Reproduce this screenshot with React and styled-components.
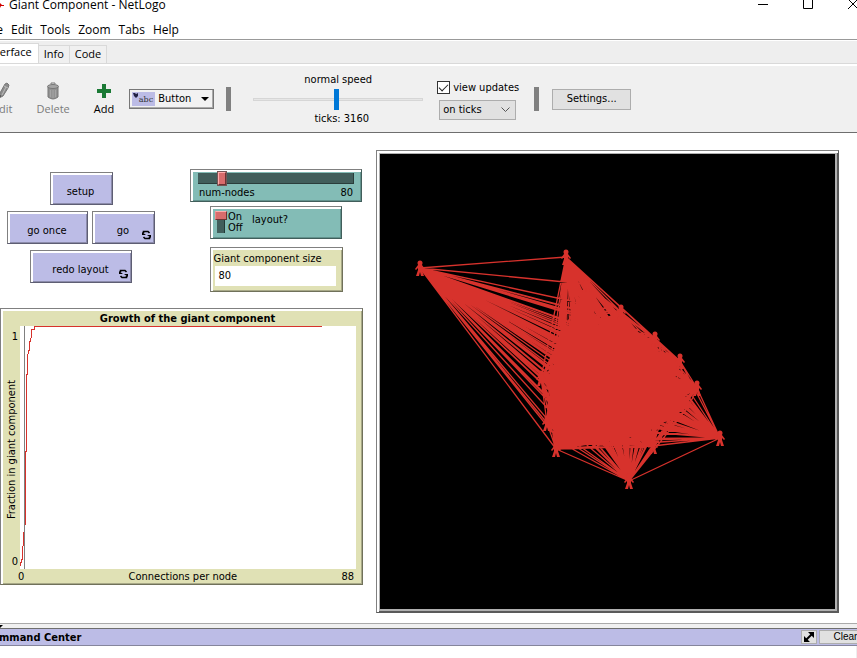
import React from "react";
import styled, { createGlobalStyle, css } from "styled-components";

const GlobalStyle = createGlobalStyle`
  *, *::before, *::after { box-sizing: border-box; }
  html, body, #root { height: 100%; }
  body {
    margin: 0;
    overflow: hidden;
    background: #fff;
    color: #000;
    font: 11px/14px "DejaVu Sans Condensed", Tahoma, "DejaVu Sans", sans-serif;
  }
  button, select, input { font: inherit; color: inherit; margin: 0; }
`;

const Window = styled.div`
  display: flex;
  flex-direction: column;
  height: 100%;
  overflow: hidden;
`;

const TitleBar = styled.header`
  display: flex;
  justify-content: space-between;
  height: 20px;
  flex: none;
`;

const Title = styled.h1`
  display: flex;
  align-items: center;
  gap: 5px;
  height: 10px;
  margin: 0;
  font: 12px/10px "Open Sans", sans-serif;
`;

const WindowButtons = styled.div`
  display: flex;
  gap: 15px;
  height: 10px;
  margin-right: -11px;
`;

const WindowButton = styled.button`
  width: 30px;
  height: 10px;
  padding: 0;
  border: 0;
  background: none;
  svg { display: block; margin: 0 auto; }
`;

const MenuBar = styled.nav`
  display: flex;
  gap: 8px;
  height: 20px;
  flex: none;
  margin-left: -16px;
  border-bottom: 1px solid #999;
`;

const MenuItem = styled.button`
  padding: 0;
  border: 0;
  background: none;
  font: 12px/19px "Open Sans", sans-serif;
`;

const TabBar = styled.div`
  display: flex;
  align-items: flex-end;
  flex: none;
  height: 23px;
  margin-top: 1px;
  padding-top: 2px;
  background: #eee;
  border-bottom: 1px solid #d9d9d9;
`;

const Tab = styled.button`
  height: ${(p) => (p.$active ? 20 : 18)}px;
  padding: 0 ${(p) => (p.$active ? 6 : 5)}px ${(p) => (p.$active ? 4 : 2)}px;
  border: 1px solid #d9d9d9;
  border-left: 0;
  border-bottom: 0;
  background: ${(p) => (p.$active ? "#fff" : "#f0f0f0")};
  font: 11px/16px "Open Sans", sans-serif;
  margin-left: ${(p) => (p.$active ? -20 : 0)}px;
`;

const Toolbar = styled.div`
  display: flex;
  align-items: center;
  flex: none;
  height: 67px;
  margin-top: 2px;
  background: #f0f0f0;
  border-bottom: 1px solid #6e6e6e;
`;

const Tools = styled.div`
  display: flex;
  gap: 24px;
  margin-left: -7px;
  margin-right: 15px;
`;

const ToolButton = styled.button`
  display: flex;
  flex-direction: column;
  align-items: center;
  gap: 1px;
  padding: 0;
  border: 0;
  background: none;
  color: #000;
  font: 11px/16px "Open Sans", sans-serif;
  &:disabled { color: #7b7b7b; }
`;

const WidgetPicker = styled.label`
  display: flex;
  align-items: center;
  width: 85px;
  height: 20px;
  margin-right: 12px;
  padding: 0 4px 0 2px;
  border: 1px solid #777;
  background: #f2f2f2;
  box-shadow: inset -1px -1px #aaa;
`;

const PickerGlyph = styled.span`
  width: 23px;
  height: 14px;
  flex: none;
  background: #bcbce6;
  font: 8px/16px "DejaVu Serif", serif;
  color: #333;
  text-align: right;
  padding-right: 2px;
  position: relative;
  svg { position: absolute; left: 1px; top: 1px; }
`;

const PlainSelect = styled.select`
  appearance: none;
  flex: 1;
  min-width: 0;
  height: 100%;
  padding: 0 0 0 3px;
  border: 0;
  background: none;
`;

const Separator = styled.div`
  width: 5px;
  height: 24px;
  flex: none;
  background: #808080;
`;

const SpeedBox = styled.label`
  display: flex;
  flex-direction: column;
  align-items: center;
  gap: 2px;
  width: 170px;
  margin: 0 14px 0 22px;
`;

const SpeedRange = styled.input`
  appearance: none;
  width: 100%;
  height: 21px;
  background: linear-gradient(#e6e6e6, #e6e6e6) center / 168px 1px no-repeat, linear-gradient(#d6d6d6, #d6d6d6) center / 100% 3px no-repeat;
  &::-webkit-slider-thumb {
    appearance: none;
    width: 5px;
    height: 21px;
    background: #0078d7;
  }
`;

const Ticks = styled.span`
  padding-left: 7px;
`;

const Updates = styled.div`
  display: flex;
  flex-direction: column;
  gap: 5px;
  width: 79px;
  margin-right: 18px;
  padding-top: 2px;
`;

const CheckLabel = styled.label`
  display: flex;
  align-items: center;
  gap: 3px;
  white-space: nowrap;
`;

const CheckBox = styled.input`
  appearance: none;
  flex: none;
  width: 13px;
  height: 13px;
  border: 1px solid #333;
  background: #fff;
  display: grid;
  place-items: center;
  &:checked::before {
    content: "";
    width: 9px;
    height: 5px;
    margin-top: -2px;
    border: solid #222;
    border-width: 0 0 1px 1px;
    transform: rotate(-45deg);
  }
`;

const SelectFrame = styled.div`
  display: flex;
  align-items: center;
  width: 77px;
  height: 20px;
  margin-left: 2px;
  padding-right: 5px;
  border: 1px solid #adadad;
  background: #e1e1e1;
`;

const PushButton = styled.button`
  width: 79px;
  height: 21px;
  margin-left: 13px;
  padding: 0;
  border: 1px solid #adadad;
  background: #e1e1e1;
`;

const Canvas = styled.main`
  display: flex;
  align-items: flex-start;
  gap: 13px;
  flex: 1;
  min-height: 0;
  padding: 17px 18px 0 0;
`;

const LeftColumn = styled.div`
  display: flex;
  flex-direction: column;
  gap: 16px;
  width: 363px;
  flex: none;
  padding-top: 19px;
`;

const WidgetGroups = styled.div`
  display: flex;
  gap: 27px;
`;

const ButtonGroup = styled.div`
  display: flex;
  flex-direction: column;
  align-items: center;
  gap: 6px;
  width: 162px;
  padding-top: 3px;
`;

const ButtonRow = styled.div`
  display: flex;
  gap: 4px;
`;

const ControlGroup = styled.div`
  display: flex;
  flex-direction: column;
  align-items: center;
  flex: 1;
`;

const raised = css`
  border: 1px solid;
  border-color: #808080 ${(p) => p.$dark} ${(p) => p.$dark} #808080;
  box-shadow: inset 2px 2px #fff, inset -1px -1px ${(p) => p.$shade};
  background: ${(p) => p.$fill};
`;

const violet = { $fill: "#bcbce6", $shade: "#8c8cab", $dark: "#5e5e73" };
const teal = { $fill: "#83bcb6", $shade: "#62928d", $dark: "#415e5b" };
const khaki = { $fill: "#e0e1b5", $shade: "#a8a988", $dark: "#70715a" };

const ModelButton = styled.button`
  ${raised}
  width: ${(p) => p.$width}px;
  height: 33px;
  padding: 6px 1px 0 0;
  position: relative;
  svg { position: absolute; right: 3px; bottom: 3px; }
`;

const SliderWidget = styled.label`
  ${raised}
  display: block;
  width: 172px;
  height: 33px;
  padding: 1px 7px 0;
`;

const NodeRange = styled.input`
  appearance: none;
  display: block;
  width: 100%;
  height: 15px;
  background:
    linear-gradient(#2a3d3b, #2a3d3b) left 0 top 12px / 100% 1px no-repeat,
    linear-gradient(#2a3d3b, #2a3d3b) right 0 top 2px / 1px 11px no-repeat,
    linear-gradient(#415e5b, #415e5b) left 0 top 2px / 100% 11px no-repeat;
  &::-webkit-slider-thumb {
    appearance: none;
    width: 8px;
    height: 13px;
    border: 1px solid;
    border-color: #ffadad #6c3333 #6c3333 #ffadad;
    background: #d86c6c;
    box-shadow: 0 0 0 1px #765454;
  }
`;

const SliderText = styled.span`
  display: flex;
  justify-content: space-between;
  padding: 0 1px;
`;

const SwitchWidget = styled.label`
  ${raised}
  display: flex;
  width: 132px;
  height: 33px;
  margin-top: 4px;
  padding: 4px 4px 3px;
`;

const SwitchLever = styled.input`
  appearance: none;
  width: 12px;
  height: 22px;
  border: 0;
  background: linear-gradient(90deg, transparent 2px, #415e5b 2px, #415e5b 9px, #223a37 9px, #223a37 10px, transparent 10px);
  &::before {
    content: "";
    display: block;
    width: 12px;
    height: 9px;
    border: 1px solid;
    border-color: #ffadad #6c3333 #6c3333 #e88;
    background: #d86c6c;
  }
  &:not(:checked)::before { margin-top: 13px; }
`;

const OnOff = styled.span`
  display: flex;
  flex-direction: column;
  width: 25px;
  padding-left: 1px;
  line-height: 11px;
`;

const SwitchName = styled.span`
  padding-top: 2px;
`;

const Monitor = styled.div`
  ${raised}
  width: 133px;
  height: 45px;
  margin-top: 8px;
  padding: 3px 6px 0 3px;
`;

const MonitorLabel = styled.label`
  display: block;
  line-height: 15px;
`;

const MonitorValue = styled.output`
  display: block;
  height: 20px;
  margin-left: 1px;
  padding: 0 4px;
  background: #fff;
  line-height: 20px;
`;

const Plot = styled.section`
  ${raised}
  display: grid;
  grid-template-columns: 17px minmax(0, 1fr);
  grid-template-rows: 15px 243px 15px;
  padding: 2px 6px 0 2px;
`;

const PlotTitle = styled.h2`
  grid-column: 1 / -1;
  margin: 0;
  padding-left: 16px;
  text-align: center;
  font: bold 11px/15px "DejaVu Sans Condensed", Tahoma, sans-serif;
`;

const YAxis = styled.div`
  display: flex;
  flex-direction: column;
  align-items: center;
  justify-content: space-between;
  padding: 4px 0 0;
`;

const YLabel = styled.span`
  writing-mode: vertical-rl;
  transform: rotate(180deg);
`;

const AxisNumber = styled.span`
  padding-left: 7px;
`;

const PlotArea = styled.svg`
  display: block;
  width: 100%;
  height: 243px;
  background: #fff;
`;

const XAxis = styled.div`
  grid-column: 1 / -1;
  display: flex;
  justify-content: space-between;
  padding: 1px 2px 0 15px;
`;

const View = styled.div`
  flex: 1;
  min-width: 0;
  padding: 2px 1px 1px 2px;
  border: 1px solid;
  border-color: #808080 #5a5a5a #5a5a5a #808080;
  box-shadow: inset 2px 2px #fff, inset -1px -1px #5a5a5a;
`;

const World = styled.svg`
  display: block;
  width: 100%;
  aspect-ratio: 1;
  background: #000;
  border: 1px solid #b0b0b0;
  border-right-width: 2px;
  border-bottom-width: 2px;
`;

const Splitter = styled.div`
  display: flex;
  flex: none;
  height: 6px;
  border-top: 1px solid #aaa;
  border-bottom: 1px solid #6e6e6e;
  background: #f0f0f0;
`;

const CommandBar = styled.div`
  display: flex;
  align-items: center;
  gap: 2px;
  flex: none;
  height: 17px;
  background: #bcbce6;
  border-bottom: 1px solid #85859c;
`;

const CommandTitle = styled.h2`
  flex: 1;
  margin: 0 0 0 -15px;
  font: bold 11px/15px "DejaVu Sans Condensed", Tahoma, sans-serif;
`;

const BarButton = styled.button`
  display: flex;
  align-items: center;
  justify-content: center;
  width: ${(p) => p.$width}px;
  height: 14px;
  padding: 0;
  border: 1px solid #adadad;
  background: #e1e1e1;
  font: 10px/12px "Liberation Sans", sans-serif;
  margin-right: ${(p) => (p.$cut ? -15 : 0)}px;
`;

const CommandOutput = styled.div`
  height: 12px;
  flex: none;
  border-right: 1px solid #eee;
`;

const RED = "#d7322c";

const rim = [
  [420, 268], [566, 257], [586, 284], [621, 312], [655, 339], [680, 361], [697, 388],
  [720, 438], [653, 446], [629, 481], [556, 449], [547, 423], [541, 378],
];

function makeNodes() {
  let seed = 17;
  const next = () => {
    seed = (seed * 16807) % 2147483647;
    return seed / 2147483647;
  };
  const bounds = [[572, 302], [622, 318], [655, 346], [680, 370], [693, 395], [688, 420], [660, 437], [610, 446], [560, 444], [550, 415], [544, 375]];
  const inside = (x, y) => {
    let hit = false;
    for (let i = 0, j = bounds.length - 1; i < bounds.length; j = i++) {
      const [a, b] = bounds[i];
      const [c, d] = bounds[j];
      if (b > y !== d > y && x < ((c - a) * (y - b)) / (d - b) + a) hit = !hit;
    }
    return hit;
  };
  const nodes = [...rim];
  while (nodes.length < 80) {
    const x = Math.round(544 + next() * 150);
    const y = Math.round(302 + next() * 144);
    if (inside(x, y)) nodes.push([x, y]);
  }
  return nodes;
}

const nodes = makeNodes();
const links = nodes
  .flatMap(([x, y], i) => nodes.slice(i + 1).map(([a, b]) => `M${x} ${y}L${a} ${b}`))
  .join("");

const Person = ({ x, y }) => (
  <g transform={`translate(${x} ${y})`}>
    <circle cx="0" cy="-5" r="2.5" />
    <path d="M-2-3H2L5 1 4 2 2 0V2L4 8H1L0 4-1 8H-4L-2 2V0L-4 2-5 1Z" />
  </g>
);

const Forever = () => (
  <svg width="9" height="10" viewBox="0 0 9 10" aria-hidden="true">
    <path d="M1.500 3V1.500H6L7.500 3M7.500 7V8.500H3L1.500 7" fill="none" stroke="#000" strokeWidth="1.600" />
    <path d="M0 2V5H4ZM9 8V5H5Z" />
  </svg>
);

const Pencil = () => (
  <svg width="18" height="18" viewBox="0 0 18 18" aria-hidden="true">
    <path d="M5 16 6 11 11 2 13 1 15 3 14 6 9 14Z" fill="#8c8c8c" stroke="#777" />
    <path d="M10 4 14 6M8 13 12 5" stroke="#bbb" fill="none" />
    <path d="M5 16 6 13 7 14Z" fill="#333" />
  </svg>
);

const Trash = () => (
  <svg width="18" height="18" viewBox="0 0 18 18" aria-hidden="true">
    <path d="M4 5V15Q9 19 14 15V5Z" fill="#929292" stroke="#777" />
    <ellipse cx="9" cy="4.5" rx="5.5" ry="2" fill="#a5a5a5" stroke="#777" />
    <path d="M7 2V1H11V2" fill="none" stroke="#777" />
    <path d="M6.500 8V15M9 8V16M11.500 8V15" stroke="#a5a5a5" />
  </svg>
);

const Plus = () => (
  <svg width="18" height="18" viewBox="0 0 18 18" aria-hidden="true">
    <path d="M7 2H11V7H16V11H11V16H7V11H2V7H7Z" fill="#1b7a35" />
  </svg>
);

export default function App() {
  return (
    <>
      <GlobalStyle />
      <Window>
        <TitleBar>
          <Title>
            <svg width="4" height="7" viewBox="0 0 4 7" aria-hidden="true">
              <path d="M0 1 2 3H4V4H1L0 6Z" fill="#d00000" />
            </svg>
            Giant Component - NetLogo
          </Title>
          <WindowButtons>
            <WindowButton aria-label="Minimize">
              <svg width="10" height="10"><path d="M0 4.500H10" stroke="#000" /></svg>
            </WindowButton>
            <WindowButton aria-label="Maximize">
              <svg width="10" height="10"><path d="M.5-1V8.500H9.500V-1" fill="none" stroke="#000" /></svg>
            </WindowButton>
            <WindowButton aria-label="Close">
              <svg width="10" height="10"><path d="M0-1 10 9M10-1 0 9" stroke="#000" /></svg>
            </WindowButton>
          </WindowButtons>
        </TitleBar>
        <MenuBar>
          {["File", "Edit", "Tools", "Zoom", "Tabs", "Help"].map((name) => (
            <MenuItem key={name}>{name}</MenuItem>
          ))}
        </MenuBar>
        <TabBar role="tablist">
          <Tab role="tab" aria-selected="true" $active>Interface</Tab>
          <Tab role="tab" aria-selected="false">Info</Tab>
          <Tab role="tab" aria-selected="false">Code</Tab>
        </TabBar>
        <Toolbar>
          <Tools>
            <ToolButton disabled><Pencil />Edit</ToolButton>
            <ToolButton disabled><Trash />Delete</ToolButton>
            <ToolButton><Plus />Add</ToolButton>
          </Tools>
          <WidgetPicker>
            <PickerGlyph aria-hidden="true">
              <svg width="6" height="6"><path d="M0 0H2L3 1 5 0V3L3 5 1 3Z" fill="#224" /></svg>
              abc
            </PickerGlyph>
            <PlainSelect aria-label="Widget type"><option>Button</option></PlainSelect>
            <svg width="8" height="5" aria-hidden="true"><path d="M0 0H8L4 4Z" /></svg>
          </WidgetPicker>
          <Separator />
          <SpeedBox>
            normal speed
            <SpeedRange type="range" min="0" max="100" defaultValue="49" />
            <Ticks>ticks: 3160</Ticks>
          </SpeedBox>
          <Updates>
            <CheckLabel><CheckBox type="checkbox" defaultChecked />view updates</CheckLabel>
            <SelectFrame>
              <PlainSelect aria-label="Update mode"><option>on ticks</option></PlainSelect>
              <svg width="9" height="6" aria-hidden="true"><path d="M.5.5 4.500 4.500 8.500.5" fill="none" stroke="#555" /></svg>
            </SelectFrame>
          </Updates>
          <Separator />
          <PushButton>Settings...</PushButton>
        </Toolbar>
        <Canvas>
          <LeftColumn>
            <WidgetGroups>
              <ButtonGroup>
                <ModelButton {...violet} $width={63}>setup</ModelButton>
                <ButtonRow>
                  <ModelButton {...violet} $width={81}>go once</ModelButton>
                  <ModelButton {...violet} $width={63}>go<Forever /></ModelButton>
                </ButtonRow>
                <ModelButton {...violet} $width={102}>redo layout<Forever /></ModelButton>
              </ButtonGroup>
              <ControlGroup>
                <SliderWidget {...teal}>
                  <NodeRange type="range" min="2" max="580" defaultValue="80" />
                  <SliderText><span>num-nodes</span><span>80</span></SliderText>
                </SliderWidget>
                <SwitchWidget {...teal}>
                  <SwitchLever type="checkbox" role="switch" defaultChecked />
                  <OnOff><span>On</span><span>Off</span></OnOff>
                  <SwitchName>layout?</SwitchName>
                </SwitchWidget>
                <Monitor {...khaki}>
                  <MonitorLabel htmlFor="giant-size">Giant component size</MonitorLabel>
                  <MonitorValue id="giant-size">80</MonitorValue>
                </Monitor>
              </ControlGroup>
            </WidgetGroups>
            <Plot {...khaki}>
              <PlotTitle>Growth of the giant component</PlotTitle>
              <YAxis>
                <AxisNumber>1</AxisNumber>
                <YLabel>Fraction in giant component</YLabel>
                <AxisNumber>0</AxisNumber>
              </YAxis>
              <PlotArea viewBox="0 0 336 243" preserveAspectRatio="none" shapeRendering="crispEdges" role="img" aria-label="Fraction in giant component against connections per node">
                <path d="M4.500 0V243" stroke="#808080" />
                <path d="M.5 240V236H1.500V233H2.500V224L3.500 216V206M5.500 199V125H6.500V48H7.500V32L8.500 24H9.500V15H10.500L11.500 9V3.500H14.500V.5H302" fill="none" stroke={RED} />
              </PlotArea>
              <XAxis><span>0</span><span>Connections per node</span><span>88</span></XAxis>
            </Plot>
          </LeftColumn>
          <View>
            <World viewBox="380 154 455 455" role="img" aria-label="Network of 80 connected nodes">
              <path d={links} fill="none" stroke={RED} strokeWidth="1.300" />
              <g fill={RED}>
                {rim.map(([x, y]) => <Person key={`${x}-${y}`} x={x} y={y} />)}
              </g>
            </World>
          </View>
        </Canvas>
        <Splitter>
          <svg width="4" height="4" aria-hidden="true"><path d="M0 1H3L0 4Z" /></svg>
        </Splitter>
        <CommandBar>
          <CommandTitle>Command Center</CommandTitle>
          <BarButton $width={16} aria-label="Expand">
            <svg width="10" height="10" viewBox="0 0 10 10"><path d="M4 0H10V6ZM0 4V10H6Z" /><path d="M2 8 8 2" stroke="#000" strokeWidth="2" /></svg>
          </BarButton>
          <BarButton $width={53} $cut>Clear</BarButton>
        </CommandBar>
        <CommandOutput />
      </Window>
    </>
  );
}
